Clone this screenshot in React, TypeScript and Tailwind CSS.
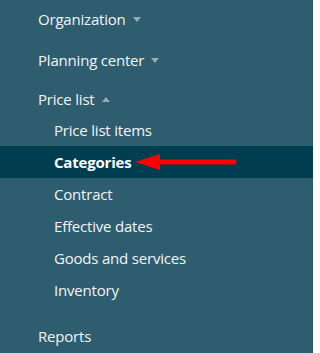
import React from 'react';

const Caret = ({ up = false }: { up?: boolean }) => (
  <svg width="8" height="5" viewBox="0 0 8 5" className="ml-[7px] mt-[1px]">
    <path d={up ? 'M0 5 L4 0 L8 5 Z' : 'M0 0 L8 0 L4 5 Z'} fill="#98abb5" />
  </svg>
);

const subItems = [
  'Price list items',
  'Categories',
  'Contract',
  'Effective dates',
  'Goods and services',
  'Inventory',
];

export default function App() {
  return (
    <div
      className="w-[313px] h-[353px] overflow-hidden bg-[#2f5d70] text-[#f4f4f4] text-[15px] leading-5 tracking-[-0.2px]"
      style={{ fontFamily: '"Open Sans", "Noto Sans", sans-serif' }}
    >
      <div className="flex items-center pl-[38px] pt-[9px] pb-[11px]">
        Organization
        <Caret />
      </div>
      <div className="flex items-center pl-[38px] py-[10px]">
        Planning center
        <Caret />
      </div>
      <div className="flex items-center pl-[38px] pt-[9px] pb-[5px]">
        Price list
        <Caret up />
      </div>
      <ul className="pb-[10px]">
        {subItems.map((item) => {
          const active = item === 'Categories';
          return (
            <li
              key={item}
              className={
                active
                  ? 'relative h-8 flex items-center pl-[54px] pb-[1px] bg-[#003d50] font-bold text-white'
                  : 'h-8 flex items-center pl-[54px] pb-[1px]'
              }
            >
              {item}
              {active && (
                <svg
                  width="102"
                  height="16"
                  viewBox="0 0 102 16"
                  className="absolute left-[135px] top-[8px]"
                >
                  <path d="M0 8 L25 0 L25 16 Z" fill="#ff0000" />
                  <line x1="22" y1="8" x2="99" y2="8" stroke="#ff0000" strokeWidth="5" strokeLinecap="round" />
                </svg>
              )}
            </li>
          );
        })}
      </ul>
      <div className="flex items-center pl-[38px] py-[10px]">Reports</div>
    </div>
  );
}
